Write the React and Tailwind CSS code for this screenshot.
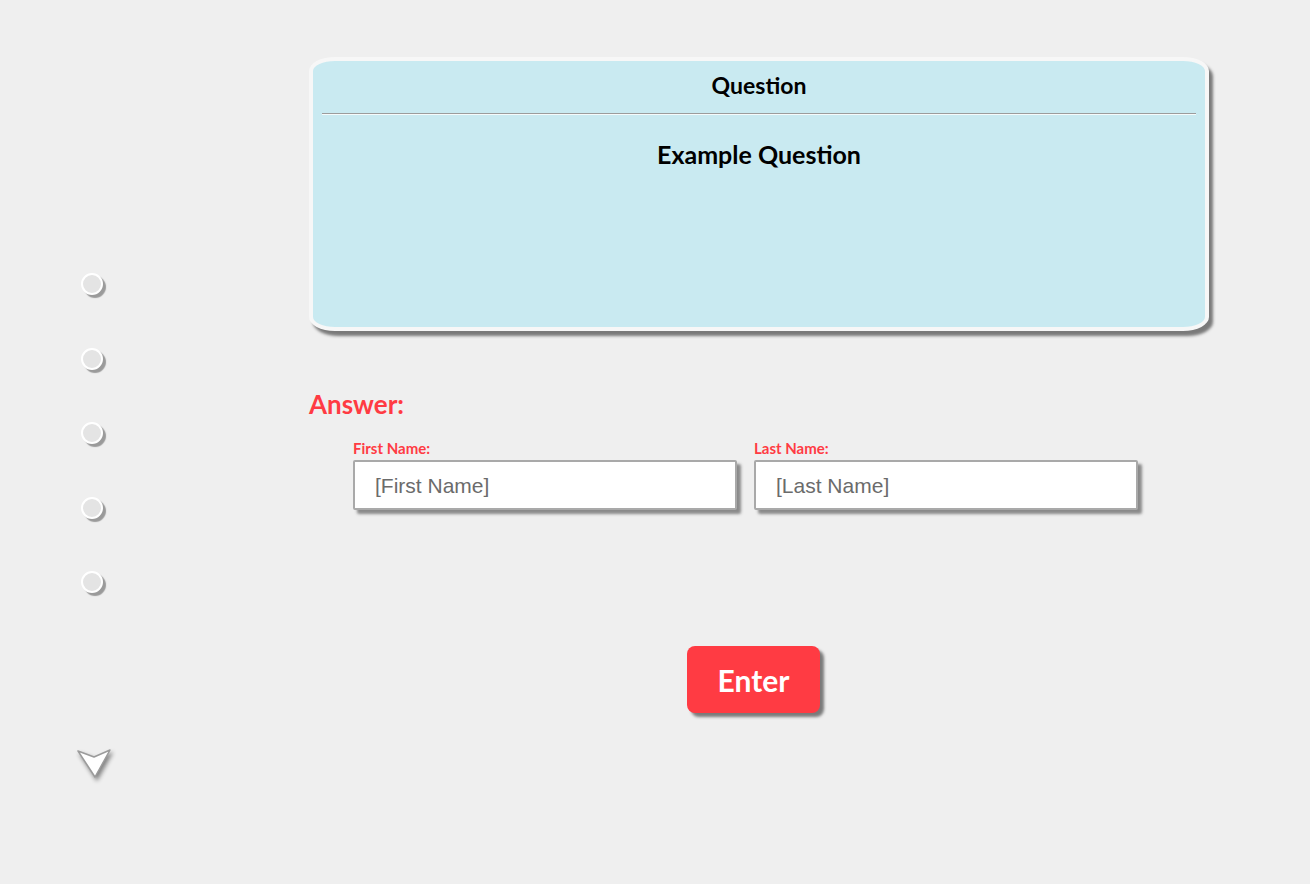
import React from "react";

const font = "font-['Lato','Noto_Sans',sans-serif]";

function Radio() {
  return (
    <div className="w-[22px] h-[22px] rounded-full bg-[#e4e4e4] border-2 border-white shadow-[3px_3px_1px_#9a9a9a]" />
  );
}

export default function App() {
  return (
    <div className={`min-h-[884px] w-full bg-[#efefef] flex ${font}`}>
      <aside className="w-[309px] shrink-0 pl-[81px] pt-[273px] flex flex-col">
        <div className="flex flex-col gap-[52.5px]">
          <Radio />
          <Radio />
          <Radio />
          <Radio />
          <Radio />
        </div>
        <svg
          className="mt-[154px] -ml-[4px] drop-shadow-[2px_3px_2px_rgba(0,0,0,0.45)]"
          width="36"
          height="34"
          viewBox="0 0 36 34"
        >
          <polygon
            points="1,4 17,10 33,3 18,30"
            fill="#ffffff"
            stroke="#9b9b9b"
            strokeWidth="1.5"
            strokeLinejoin="round"
          />
        </svg>
      </aside>

      <main className="w-[900px] pt-[57px] flex flex-col">
        <section className="h-[274px] rounded-[26px_/_14px] border-4 border-[#f7f7f7] bg-[#c9eaf1] shadow-[4px_5px_3px_#7a7a7a] flex flex-col px-[9px]">
          <h2 className="text-center text-[23px] font-bold text-black leading-none pt-[13px] pb-[16px]">
            Question
          </h2>
          <div className="h-[2px] border-t border-[#9c9c9c] bg-white/70 border-b border-b-[#f5fbfc]" />
          <p className="text-center text-[25px] font-bold text-black leading-none pt-[27px]">
            Example Question
          </p>
        </section>

        <h3 className="mt-[60px] text-[26px] font-bold text-[#ff3b43] leading-none">
          Answer:
        </h3>

        <div className="mt-[24px] pl-[44px] flex gap-[17px]">
          <label className="flex flex-col w-[384px]">
            <span className="text-[15px] font-bold text-[#ff3b43] leading-none mb-[4px]">
              First Name:
            </span>
            <div className="h-[50px] bg-white border-2 border-[#a9a9a9] rounded-[2px] shadow-[4px_4px_3px_#8a8a8a] flex items-center pl-[20px] pt-[2px] text-[21px] text-[#6b6b6b] font-['Liberation_Sans',sans-serif]">
              [First Name]
            </div>
          </label>
          <label className="flex flex-col w-[384px]">
            <span className="text-[15px] font-bold text-[#ff3b43] leading-none mb-[4px]">
              Last Name:
            </span>
            <div className="h-[50px] bg-white border-2 border-[#a9a9a9] rounded-[2px] shadow-[4px_4px_3px_#8a8a8a] flex items-center pl-[20px] pt-[2px] text-[21px] text-[#6b6b6b] font-['Liberation_Sans',sans-serif]">
              [Last Name]
            </div>
          </label>
        </div>

        <div className="mt-[136px] pl-[378px]">
          <button className="w-[133px] h-[67px] rounded-[8px] bg-[#ff3b43] shadow-[4px_4px_3px_#7a7a7a] text-white text-[30px] font-bold leading-none">
            Enter
          </button>
        </div>
      </main>
    </div>
  );
}
